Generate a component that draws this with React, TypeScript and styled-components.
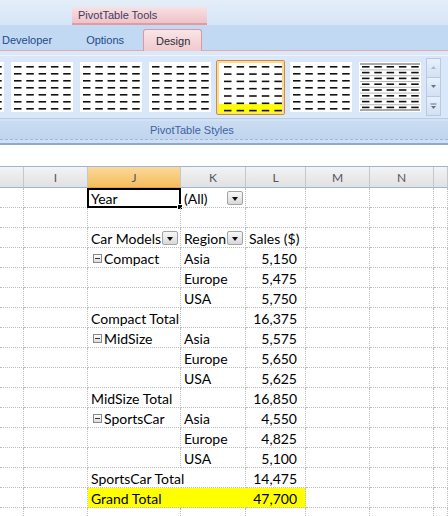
import React from "react";
import styled, { createGlobalStyle, css } from "styled-components";

const GlobalStyle = createGlobalStyle`
  html, body { margin: 0; padding: 0; background: #ffffff; }
  body {
    width: 448px;
    height: 516px;
    overflow: hidden;
    font-family: "Liberation Sans", Arial, sans-serif;
  }
  * { box-sizing: border-box; }
`;

const Page = styled.div`
  width: 448px;
  height: 516px;
  display: flex;
  flex-direction: column;
  overflow: hidden;
  background: #fff;
`;

/* ---------- ribbon ---------- */

const Ribbon = styled.div`
  flex: none;
  height: 145px;
  display: flex;
  flex-direction: column;
  background: #d3e3f6;
  border-bottom: 2px solid #8ea9cf;
`;

const TitleStrip = styled.div`
  height: 25px;
  display: flex;
  align-items: flex-end;
  padding-left: 72px;
  background: linear-gradient(#e4eef9, #d6e5f6);
`;

const ContextHeader = styled.div`
  width: 135px;
  height: 18px;
  padding-left: 6px;
  display: flex;
  align-items: center;
  font-size: 11px;
  color: #3c3d66;
  background: linear-gradient(#f8e0e3, #eec3c8);
  border-bottom: 2px solid #e49aa3;
`;

const TabStrip = styled.div`
  height: 26px;
  display: flex;
  align-items: flex-end;
  background: #c2d9f4;
  border-bottom: 1px solid #e4a9b0;
`;

const Tab = styled.div<{ $active?: boolean }>`
  height: 21px;
  padding: 0 17px;
  display: flex;
  align-items: center;
  font-size: 11px;
  color: #1e4a86;
  &:first-child { padding-left: 2px; }
  ${(p) =>
    p.$active &&
    css`
      height: 22px;
      margin: 0 0 -1px 2px;
      padding: 0 11px 0 12px;
      color: #2a2a3a;
      background: linear-gradient(#f9e5e7, #f0c9cd);
      border: 1px solid #d99aa2;
      border-bottom: none;
      border-radius: 3px 3px 0 0;
    `}
`;

const RibbonBody = styled.div`
  flex: 1;
  display: flex;
  flex-direction: column;
  padding-top: 4px;
  background: linear-gradient(#dae8f8, #cfe0f4);
`;

const Gallery = styled.div`
  height: 64px;
  display: flex;
  align-items: center;
  padding-right: 7px;
  background: #d9e7f8;
  border-top: 1px solid #eef4fc;
  border-bottom: 1px solid #b7cce8;
`;

const ThumbRow = styled.div`
  flex: 1;
  height: 100%;
  display: flex;
  align-items: center;
  justify-content: flex-end;
  gap: 3px;
  padding-right: 3px;
  overflow: hidden;
`;

const Thumb = styled.div<{ $selected?: boolean }>`
  flex: none;
  display: flex;
  margin: 0 2px;
  background: #fff;
  ${(p) =>
    p.$selected &&
    css`
      margin: 0;
      padding: 2px 2px 1px;
      border: 1px solid #c98d45;
      border-radius: 2px;
      box-shadow: inset 0 0 0 2px #fcd995;
    `}
`;

const ScrollCol = styled.div`
  flex: none;
  width: 15px;
  height: 59px;
  display: flex;
  flex-direction: column;
`;

const ScrollBtn = styled.div`
  flex: 1;
  display: flex;
  align-items: center;
  justify-content: center;
  background: linear-gradient(#e8f0fa, #d3e1f3);
  border: 1px solid #b5cae6;
  & + & { border-top: none; }
`;

const GroupLabel = styled.div`
  height: 19px;
  margin-top: 2px;
  padding-left: 150px;
  display: flex;
  align-items: center;
  font-size: 11px;
  color: #3e62a0;
  background: linear-gradient(#cadcf2, #c1d5ee);
  border-bottom: 1px dashed #9fb8da;
`;

const FormulaGap = styled.div`
  flex: none;
  height: 21px;
  background: #fff;
`;

/* ---------- sheet ---------- */

const Sheet = styled.div`
  display: grid;
  grid-template-columns: 24px 64px 93px 65px 60px 64px 64px 14px;
  grid-template-rows: 21px;
  grid-auto-rows: 20px;
  border-top: 1px solid #9db5d6;
  font-family: Lato, "Liberation Sans", sans-serif;
`;

const HeadCell = styled.div<{ $active?: boolean }>`
  display: flex;
  align-items: center;
  justify-content: center;
  font-size: 12px;
  color: #4f5661;
  background: ${(p) =>
    p.$active ? "linear-gradient(#fbd999, #f4bd5e)" : "linear-gradient(#f3f3f3, #e1e1e1)"};
  border-right: 1px solid #c2c8d0;
  border-bottom: 1px solid ${(p) => (p.$active ? "#e3a23f" : "#9db5d6")};
`;

const Cell = styled.div<{ $right?: boolean; $fill?: string; $open?: boolean }>`
  position: relative;
  min-width: 0;
  display: flex;
  align-items: center;
  justify-content: ${(p) => (p.$right ? "flex-end" : "space-between")};
  padding: 1px ${(p) => (p.$right ? "8px" : "2px")} 0 3px;
  font-size: 14px;
  color: #000;
  white-space: nowrap;
  background: ${(p) => p.$fill ?? "transparent"};
  border-right: 1px dotted ${(p) => (p.$open ? "transparent" : "#bcbcbc")};
  border-bottom: 1px dotted #bcbcbc;
`;

const Label = styled.span`
  display: inline-flex;
  align-items: center;
`;

const Toggle = styled.span`
  flex: none;
  width: 9px;
  height: 9px;
  margin: 0 2px 0 2px;
  display: inline-flex;
  align-items: center;
  justify-content: center;
  border: 1px solid #8a8a8a;
  background: linear-gradient(#ffffff, #dcdcdc);
  &::after {
    content: "";
    width: 5px;
    height: 1px;
    background: #333;
  }
`;

const DropButton = styled.span`
  flex: none;
  width: 16px;
  height: 14px;
  display: flex;
  align-items: center;
  justify-content: center;
  border: 1px solid #a3a3a3;
  border-radius: 2px;
  background: linear-gradient(#f8f8f8, #d9d9d9);
  &::after {
    content: "";
    margin-top: 1px;
    border-left: 3.5px solid transparent;
    border-right: 3.5px solid transparent;
    border-top: 4px solid #111;
  }
`;

const Selection = styled.div`
  position: absolute;
  left: -1px;
  top: 0;
  right: -1px;
  bottom: -1px;
  border: 2px solid #000;
  pointer-events: none;
`;

const FillHandle = styled.div`
  position: absolute;
  right: -4px;
  bottom: -4px;
  width: 6px;
  height: 6px;
  background: #000;
  border: 1px solid #fff;
`;

/* ---------- thumbnails ---------- */

type Variant = "plain" | "selected" | "banded";

const ThumbArt = ({ variant }: { variant: Variant }) => {
  const w = variant === "selected" ? 63 : 62;
  const h = 50;
  const rows = variant === "banded" ? 8 : 7;
  const y0 = variant === "selected" ? 3 : 4;
  const dy = variant === "banded" ? 5.8 : variant === "selected" ? 7.3 : 7;
  const x0 = variant === "selected" ? 5 : 3;
  const dx = variant === "selected" ? 12.6 : 12.3;
  const dashes = [];
  for (let r = 0; r < rows; r++) {
    for (let c = 0; c < 5; c++) {
      dashes.push(
        <rect key={`${r}-${c}`} x={x0 + c * dx} y={y0 + r * dy} width={7.5} height={1.6} fill="#111" />
      );
    }
  }
  return (
    <svg width={w} height={h} viewBox={`0 0 ${w} ${h}`}>
      {variant === "selected" && <rect x={0} y={41} width={w} height={9} fill="#ffff00" />}
      {variant === "banded" && (
        <>
          <rect x={1} y={1.5} width={w - 2} height={1} fill="#555" />
          <rect x={1} y={47.5} width={w - 2} height={1} fill="#555" />
          {Array.from({ length: rows - 1 }, (_, i) => (
            <rect key={i} x={1} y={y0 + 3.4 + i * dy} width={w - 2} height={1} fill="#b9b9b9" />
          ))}
        </>
      )}
      {dashes}
    </svg>
  );
};

const Arrow = ({ kind }: { kind: "up" | "down" | "more" }) => (
  <svg width="9" height="9" viewBox="0 0 9 9">
    {kind === "up" && <path d="M2 6 L4.5 3 L7 6 Z" fill="#a9b8cc" />}
    {kind === "down" && <path d="M2 3 L7 3 L4.5 6 Z" fill="#5f7392" />}
    {kind === "more" && (
      <>
        <rect x="1.5" y="1.5" width="6" height="1" fill="#5f7392" />
        <path d="M2 4 L7 4 L4.5 7 Z" fill="#5f7392" />
      </>
    )}
  </svg>
);

/* ---------- data ---------- */

type Row = {
  j?: React.ReactNode;
  k?: React.ReactNode;
  l?: string;
  lLeft?: boolean;
  spill?: boolean;
  grand?: boolean;
  selected?: boolean;
};

const Dropdown = ({ text }: { text: string }) => (
  <>
    <Label>{text}</Label>
    <DropButton />
  </>
);

const Group = ({ name }: { name: string }) => (
  <Label>
    <Toggle />
    {name}
  </Label>
);

const rows: Row[] = [
  { j: "Year", k: <Dropdown text="(All)" />, selected: true },
  {},
  { j: <Dropdown text="Car Models" />, k: <Dropdown text="Region" />, l: "Sales ($)", lLeft: true },
  { j: <Group name="Compact" />, k: "Asia", l: "5,150" },
  { k: "Europe", l: "5,475" },
  { k: "USA", l: "5,750" },
  { j: "Compact Total", l: "16,375" },
  { j: <Group name="MidSize" />, k: "Asia", l: "5,575" },
  { k: "Europe", l: "5,650" },
  { k: "USA", l: "5,625" },
  { j: "MidSize Total", l: "16,850" },
  { j: <Group name="SportsCar" />, k: "Asia", l: "4,550" },
  { k: "Europe", l: "4,825" },
  { k: "USA", l: "5,100" },
  { j: "SportsCar Total", l: "14,475", spill: true },
  { j: "Grand Total", l: "47,700", grand: true },
  {},
];

const columns = ["", "I", "J", "K", "L", "M", "N", ""];

const thumbs: Variant[] = ["plain", "plain", "plain", "plain", "selected", "plain", "banded"];

export default function App() {
  return (
    <Page>
      <GlobalStyle />
      <Ribbon>
        <TitleStrip>
          <ContextHeader>PivotTable Tools</ContextHeader>
        </TitleStrip>
        <TabStrip>
          <Tab>Developer</Tab>
          <Tab>Options</Tab>
          <Tab $active>Design</Tab>
        </TabStrip>
        <RibbonBody>
          <Gallery>
            <ThumbRow>
              {thumbs.map((v, i) => (
                <Thumb key={i} $selected={v === "selected"}>
                  <ThumbArt variant={v} />
                </Thumb>
              ))}
            </ThumbRow>
            <ScrollCol>
              <ScrollBtn>
                <Arrow kind="up" />
              </ScrollBtn>
              <ScrollBtn>
                <Arrow kind="down" />
              </ScrollBtn>
              <ScrollBtn>
                <Arrow kind="more" />
              </ScrollBtn>
            </ScrollCol>
          </Gallery>
          <GroupLabel>PivotTable Styles</GroupLabel>
        </RibbonBody>
      </Ribbon>
      <FormulaGap />
      <Sheet>
        {columns.map((c, i) => (
          <HeadCell key={`h${i}`} $active={c === "J"}>
            {c}
          </HeadCell>
        ))}
        {rows.map((r, i) => {
          const fill = r.grand ? "#ffff00" : undefined;
          return (
            <React.Fragment key={`r${i}`}>
              <Cell />
              <Cell />
              <Cell $fill={fill} $open={r.spill || r.grand}>
                {typeof r.j === "string" ? <Label>{r.j}</Label> : r.j}
                {r.selected && (
                  <Selection>
                    <FillHandle />
                  </Selection>
                )}
              </Cell>
              <Cell $fill={fill} $open={r.grand}>
                {typeof r.k === "string" ? <Label>{r.k}</Label> : r.k}
              </Cell>
              <Cell $fill={fill} $right={!!r.l && !r.lLeft}>
                {r.l && <Label>{r.l}</Label>}
              </Cell>
              <Cell />
              <Cell />
              <Cell />
            </React.Fragment>
          );
        })}
      </Sheet>
    </Page>
  );
}
